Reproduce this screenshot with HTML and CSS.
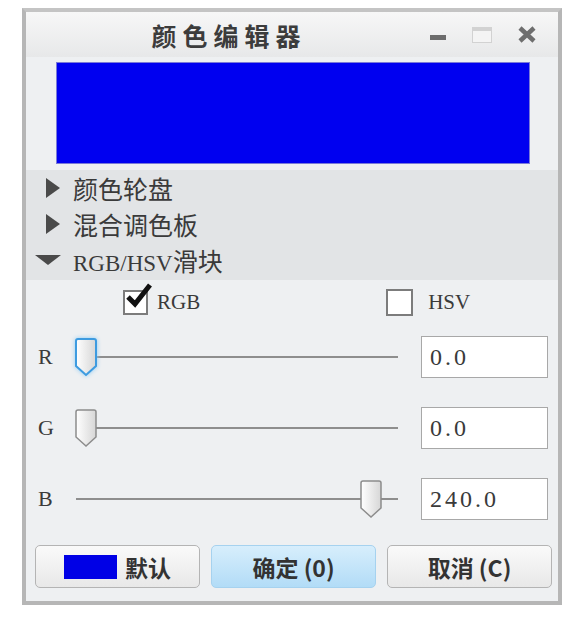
FILE: index.html
```html
<!DOCTYPE html>
<html lang="zh-CN">
<head>
  <meta charset="UTF-8" />
  <title>颜色编辑器</title>
  <link rel="stylesheet" href="styles.css">
</head>
<body>

  <div class="window">
    <div class="titlebar">
      <div class="title">颜色编辑器</div>
      <div class="controls">
        <span class="ctl-min"></span>
        <span class="ctl-max"></span>
        <svg class="ctl-close" width="18" height="17" viewBox="0 0 18 17">
          <path d="M2 2 L16 15 M16 2 L2 15" stroke="#6e6e6e" stroke-width="4.5" />
        </svg>
      </div>
    </div>

    <div class="preview">
      <div class="swatch"></div>
    </div>

    <div class="sections">
      <div class="section">
        <svg class="arrow" width="16" height="20" viewBox="0 0 16 20"><path d="M1 0 L15 10 L1 20 Z" fill="#4a4a4a"/></svg>
        <span>颜色轮盘</span>
      </div>
      <div class="section">
        <svg class="arrow" width="16" height="20" viewBox="0 0 16 20"><path d="M1 0 L15 10 L1 20 Z" fill="#4a4a4a"/></svg>
        <span>混合调色板</span>
      </div>
      <div class="section open">
        <svg class="arrow-down" width="26" height="10" viewBox="0 0 26 10"><path d="M0 0 L26 0 L13 10 Z" fill="#4a4a4a"/></svg>
        <span><span class="latin">RGB/HSV</span>滑块</span>
      </div>
    </div>

    <div class="modes">
      <label class="mode mode-rgb">
        <span class="checkbox">
          <svg class="check" width="30" height="28" viewBox="0 0 30 28">
            <path d="M4 14 L11 21 L26 2" fill="none" stroke="#111" stroke-width="5" />
          </svg>
        </span>
        <span class="latin">RGB</span>
      </label>
      <label class="mode mode-hsv">
        <span class="checkbox"></span>
        <span class="latin">HSV</span>
      </label>
    </div>

    <div class="sliders">
      <div class="slider-row">
        <span class="axis latin">R</span>
        <div class="track">
          <span class="thumb focused" style="left: 0%">
            <svg width="24" height="40" viewBox="0 0 24 40"><path d="M4 2 H20 Q22 2 22 4 V29 L12 38 L2 29 V4 Q2 2 4 2 Z" fill="url(#g)" stroke="#3d9be0" stroke-width="2"/></svg>
          </span>
        </div>
        <input class="value latin" value="0.0">
      </div>
      <div class="slider-row">
        <span class="axis latin">G</span>
        <div class="track">
          <span class="thumb" style="left: 0%">
            <svg width="24" height="40" viewBox="0 0 24 40"><path d="M4 2 H20 Q22 2 22 4 V29 L12 38 L2 29 V4 Q2 2 4 2 Z" fill="url(#g)" stroke="#8c8c8c" stroke-width="1.5"/></svg>
          </span>
        </div>
        <input class="value latin" value="0.0">
      </div>
      <div class="slider-row">
        <span class="axis latin">B</span>
        <div class="track">
          <span class="thumb" style="left: 88.5%">
            <svg width="24" height="40" viewBox="0 0 24 40"><path d="M4 2 H20 Q22 2 22 4 V29 L12 38 L2 29 V4 Q2 2 4 2 Z" fill="url(#g)" stroke="#8c8c8c" stroke-width="1.5"/></svg>
          </span>
        </div>
        <input class="value latin" value="240.0">
      </div>
    </div>

    <div class="buttons">
      <button class="btn"><span class="btn-swatch"></span>默认</button>
      <button class="btn primary">确定 (0)</button>
      <button class="btn">取消 (C)</button>
    </div>
  </div>

  <svg width="0" height="0" class="defs">
    <defs>
      <linearGradient id="g" x1="0" y1="0" x2="1" y2="0">
        <stop offset="0" stop-color="#ffffff"/>
        <stop offset="1" stop-color="#d6d6d6"/>
      </linearGradient>
    </defs>
  </svg>

</body>
</html>
```

FILE: styles.css
```css
body {
  margin: 0;
  background-color: #ffffff;
  font-family: "Noto Sans CJK SC", "Noto Sans", sans-serif;
  color: #3a3a3a;
}

.latin {
  font-family: "Liberation Serif", "Noto Sans CJK SC", serif;
}

.window {
  margin: 8px 0 0 22px;
  width: 540px;
  height: 597px;
  box-sizing: border-box;
  border: 4px solid #b6b6b6;
  border-top-color: #c4c4c4;
  background-color: #eef0f2;
  display: flex;
  flex-direction: column;
}

.titlebar {
  height: 45px;
  display: flex;
  align-items: center;
  background: linear-gradient(#f7f7f7, #e7e8e9);
}

.title {
  flex: 1;
  text-align: center;
  font-size: 25px;
  font-weight: bold;
  letter-spacing: 6px;
  color: #3c3c3c;
  padding-left: 8px;
}

.controls {
  width: 128px;
  display: flex;
  align-items: center;
  gap: 26px;
  padding-left: 6px;
}

.ctl-min {
  width: 16px;
  height: 5px;
  margin-top: 6px;
  background-color: #6c6c6c;
}

.ctl-max {
  width: 18px;
  height: 11px;
  border: 1px solid #d2d2d2;
  border-top: 4px solid #d2d2d2;
  background-color: #f4f4f4;
}

.preview {
  padding: 5px 28px 6px 30px;
}

.swatch {
  height: 100px;
  background-color: #0000f0;
  border: 1px solid #7a7ad8;
}

.sections {
  background-color: #e2e4e6;
  padding: 0 0 2px 0;
}

.section {
  height: 36px;
  display: flex;
  align-items: center;
  font-size: 25px;
  color: #3a3a3a;
}

.arrow {
  margin: 0 12px 0 19px;
}

.arrow-down {
  margin: 0 12px 0 9px;
}

.section .latin {
  font-size: 23px;
}

.modes {
  height: 44px;
  display: flex;
  align-items: center;
  font-size: 21px;
}

.mode {
  display: flex;
  align-items: center;
  gap: 9px;
}

.mode-rgb {
  margin-left: 97px;
}

.mode-hsv {
  margin-left: 186px;
}

.checkbox {
  position: relative;
  width: 21px;
  height: 21px;
  border: 2px solid #7c7c7c;
  background-color: #ffffff;
}

.mode-hsv .checkbox {
  width: 23px;
  height: 23px;
  margin-right: 6px;
}

.check {
  position: absolute;
  left: -1px;
  top: -9px;
}

.sliders {
  display: flex;
  flex-direction: column;
  gap: 29px;
  padding-top: 12px;
}

.slider-row {
  height: 42px;
  display: flex;
  align-items: center;
}

.axis {
  width: 50px;
  padding-left: 12px;
  box-sizing: border-box;
  font-size: 22px;
}

.track {
  position: relative;
  width: 322px;
  height: 2px;
  background-color: #8e8e8e;
  margin-right: 23px;
}

.thumb {
  position: absolute;
  top: -19px;
  margin-left: -2px;
  width: 24px;
  height: 40px;
}

.thumb.focused svg {
  filter: drop-shadow(0 0 2px #8ecbf5);
}

.value {
  width: 127px;
  height: 42px;
  box-sizing: border-box;
  border: 1px solid #a8a8a8;
  background-color: #ffffff;
  padding: 0 0 0 8px;
  font-size: 24px;
  letter-spacing: 3px;
  color: #3a3a3a;
  outline: none;
}

.buttons {
  margin-top: auto;
  padding: 0 6px 13px 9px;
  display: flex;
  gap: 11px;
}

.btn {
  flex: 1;
  height: 43px;
  border: 1px solid #b4b4b4;
  border-radius: 5px;
  background: linear-gradient(#fafafa, #e8e8e8);
  font-family: "Noto Sans CJK SC", "Noto Sans", sans-serif;
  font-size: 23px;
  font-weight: bold;
  color: #333333;
  display: flex;
  align-items: center;
  justify-content: center;
  gap: 8px;
  padding: 0;
}

.btn.primary {
  border-color: #a6d2ef;
  background: linear-gradient(#d7eefc, #b2dcf7);
}

.btn-swatch {
  width: 53px;
  height: 24px;
  background-color: #0000e6;
}

.defs {
  position: absolute;
}
```
